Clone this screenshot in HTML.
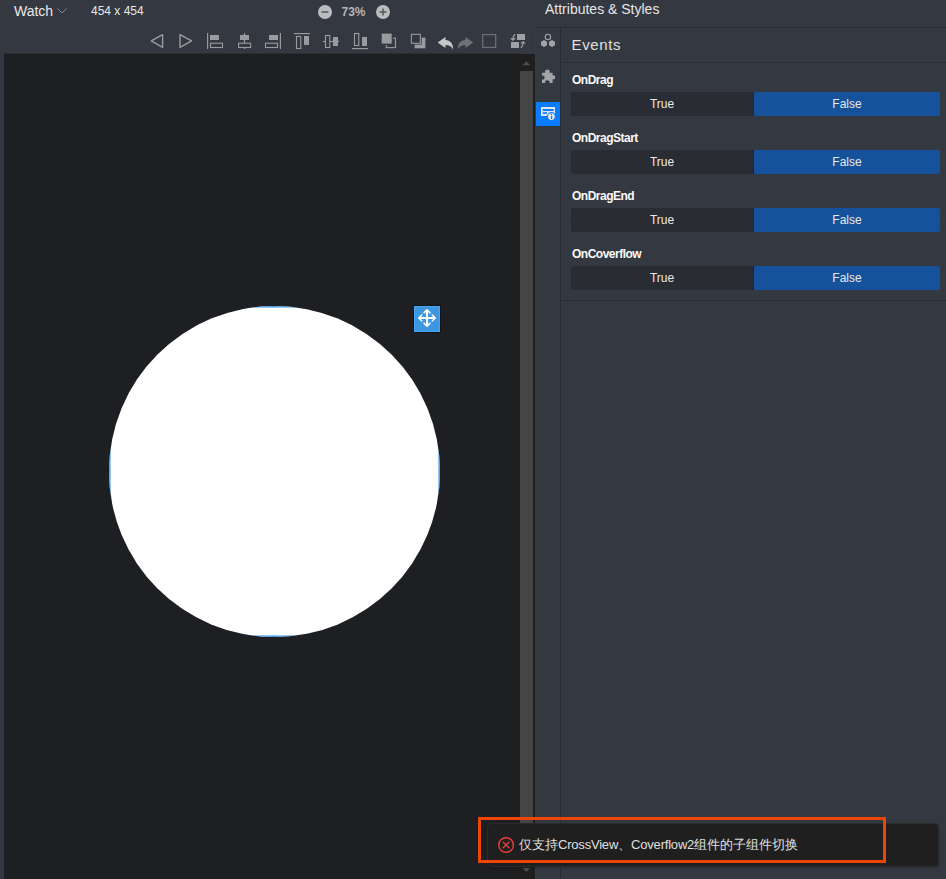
<!DOCTYPE html>
<html><head><meta charset="utf-8">
<style>
*{margin:0;padding:0;box-sizing:border-box}
html,body{width:946px;height:879px;overflow:hidden;background:#343840;font-family:"Liberation Sans",sans-serif;position:relative}
.abs{position:absolute}
#watch{left:14px;top:2px;font-size:14px;color:#e8e8e8;line-height:18px}
#size{left:91px;top:3px;font-size:12px;color:#e6e6e6;line-height:16px}
#pct{left:341.5px;top:4px;font-size:12px;font-weight:bold;color:#b4b5b8;line-height:16px}
#canvas{left:4px;top:54px;width:514px;height:825px;background:#1d1f23;box-shadow:0 -1px 0 #2a2d33}
#track{left:518px;top:54px;width:17px;height:825px;background:#1f1f1f}
#thumb{left:520px;top:71px;width:13px;height:760px;background:#454545}
#ptitle{left:545px;top:0px;font-size:14px;color:#e6e6e6;line-height:18px}
#hline{left:535px;top:27px;width:411px;height:1px;background:#2a2d34}
#side{left:535px;top:28px;width:25px;height:851px;background:#343840;border-left:1px solid #373b43}
#vdiv{left:560px;top:28px;width:1px;height:851px;background:#2a2d34}
#tab{left:536px;top:102px;width:24px;height:24px;background:#0a7cff}
#events{left:571.6px;top:36px;font-size:15px;letter-spacing:0.6px;color:#e0e0e0;line-height:18px}
#eline{left:561px;top:62px;width:385px;height:1px;background:#2a2d34}
#bline{left:561px;top:300px;width:385px;height:1px;background:#2a2d34}
.lbl{position:absolute;left:572px;font-size:12px;font-weight:bold;letter-spacing:-0.5px;color:#fafafa;line-height:14px}
.btns{position:absolute;left:571px;width:369px;height:24px;display:flex;border-radius:2px;overflow:hidden}
.bt{width:183px;background:#292c33;color:#e8e8e8;font-size:12px;text-align:center;line-height:24px;border-right:1px solid #23252b}
.bf{flex:1;background:#16529b;color:#e8e8e8;font-size:12px;text-align:center;line-height:24px}
#circle{left:109px;top:306px;width:331px;height:331px;border-radius:50%;overflow:hidden;background:#fff}
#circle div{position:absolute;left:0;top:0;width:331px;height:331px;border:1px solid #3f97e8;box-shadow:inset 0 0 0 1px rgba(63,151,232,0.55)}
#move{left:414px;top:306px;width:26px;height:26px;background:#3d96e0;border:1px solid #4aa5f2;box-shadow:0 0 0 1px rgba(10,10,10,0.55)}
#toastbox{left:478px;top:817px;width:408px;height:46px;border:3px solid #f04508}
#toast{left:487px;top:823px;width:452px;height:44px;box-shadow:0 1px 3px rgba(0,0,0,0.25);background:#1f1f1f;border:1px solid #2c2c2c;border-radius:4px}
.la{letter-spacing:-0.2px}
#tmsg{left:519px;top:836px;font-size:13px;color:#e0e0e0;line-height:18px;white-space:nowrap}
</style></head><body>
<div id="watch" class="abs">Watch</div>
<svg class="abs" style="left:57px;top:8px" width="11" height="7"><path d="M0.5 0.5 L5 5 L9.5 0.5" stroke="#8a8d93" fill="none" stroke-width="1"/></svg>
<div id="size" class="abs">454 x 454</div>
<svg class="abs" style="left:318px;top:5px" width="14" height="14"><circle cx="7" cy="7" r="7" fill="#bbbcc0"/><rect x="3.5" y="6.2" width="7" height="1.6" fill="#5a5d63"/></svg>
<div id="pct" class="abs">73%</div>
<svg class="abs" style="left:376px;top:5px" width="14" height="14"><circle cx="7" cy="7" r="7" fill="#bbbcc0"/><rect x="3.5" y="6.2" width="7" height="1.6" fill="#5a5d63"/><rect x="6.2" y="3.5" width="1.6" height="7" fill="#5a5d63"/></svg>

<svg class="abs" style="left:0;top:0" width="946" height="879" viewBox="0 0 946 879">
<g fill="none" stroke="#9a9b9f" stroke-width="1.4" stroke-linejoin="round">
<path d="M162.6 34.6 L151.3 40.9 L162.6 47.3 Z"/>
<path d="M180 34.6 L191.6 40.9 L180 47.3 Z"/>
</g>
<g fill="#9a9b9f">
<rect x="207" y="33" width="1.2" height="16"/>
<rect x="210" y="35" width="9" height="5"/>
<rect x="243.9" y="33" width="1.2" height="16"/>
<rect x="240" y="35" width="9" height="5"/>
<rect x="279.8" y="33" width="1.2" height="16"/>
<rect x="269" y="35" width="9" height="5"/>
<rect x="294" y="33" width="16" height="1.2"/>
<rect x="304" y="36" width="5" height="9"/>
<rect x="323" y="40.9" width="16" height="1.2"/>
<rect x="333" y="37" width="5" height="9"/>
<rect x="352" y="48" width="16" height="1.2"/>
<rect x="362" y="37" width="5" height="9"/>
</g>
<g fill="#343840" stroke="#9a9b9f" stroke-width="1.1">
<rect x="210.5" y="43.2" width="12" height="4.3"/>
<rect x="238.6" y="43.2" width="12" height="4.3"/>
<rect x="265.5" y="43.2" width="12" height="4.3"/>
<rect x="296.5" y="36.5" width="4.3" height="12"/>
<rect x="325.5" y="35.5" width="4.3" height="12"/>
<rect x="354.5" y="33.5" width="4.3" height="12"/>
</g>
<!-- bring front -->
<rect x="386.3" y="38.2" width="9.2" height="9.4" fill="none" stroke="#9a9b9f" stroke-width="1.1"/>
<rect x="381.7" y="33.6" width="10" height="10" fill="#9a9b9f" stroke="#343840" stroke-width="2.6"/>
<rect x="381.7" y="33.6" width="10" height="10" fill="#9a9b9f"/>
<!-- send back -->
<rect x="414.6" y="37.6" width="10.8" height="10.7" fill="#9a9b9f"/>
<rect x="411.4" y="34.3" width="9" height="9" fill="#343840" stroke="#343840" stroke-width="2.6"/>
<rect x="411.4" y="34.3" width="9" height="9" fill="#343840" stroke="#9a9b9f" stroke-width="1.1"/>
<!-- undo/redo -->
<path d="M437.6 42.5 L445.5 36.9 L445.5 40.1 C450.5 40.3 453.6 44.4 452.9 49.2 C451.2 46.2 448.8 45.1 445.5 45.1 L445.5 48 Z" fill="#c5c6c9"/>
<path d="M473.3 42.5 L465.4 36.9 L465.4 40.1 C460.4 40.3 457.3 44.4 458 49.2 C459.7 46.2 462.1 45.1 465.4 45.1 L465.4 48 Z" fill="#6f7075"/>
<rect x="482.7" y="34.6" width="13" height="12.8" fill="none" stroke="#6f7075" stroke-width="1.2"/>
<!-- switch -->
<g fill="#a0a1a5">
<rect x="517" y="34" width="8" height="6"/>
<rect x="511" y="42" width="8" height="6"/>
<path d="M509.9 38.3 L516 38.3 L513 41 Z"/>
<path d="M520.2 43.6 L526 43.6 L523 41 Z"/>
</g>
<g fill="none" stroke="#a0a1a5" stroke-width="1.3">
<path d="M515.3 34.2 C513.6 35.5 513 37 513 38.6"/>
<path d="M520.8 47.8 C522.4 46.5 523 45 523 43.4"/>
</g>
</svg>
<div id="canvas" class="abs"></div>
<div id="track" class="abs"></div>
<div id="thumb" class="abs"></div>
<svg class="abs" style="left:518px;top:53px" width="17" height="826" viewBox="518 53 17 826"><path d="M522.6 65.2 L526.4 61.2 L530.2 65.2 Z" fill="#4f4f4f"/><path d="M522.6 868 L526.4 872 L530.2 868 Z" fill="#4f4f4f"/></svg>

<div id="circle" class="abs"><div></div></div>
<div id="move" class="abs"></div>
<svg class="abs" style="left:414px;top:306px" width="26" height="26" viewBox="414 306 26 26">
<g fill="#fff">
<rect x="426" y="310.5" width="2" height="15"/>
<rect x="419.5" y="317" width="15" height="2"/>
</g>
<path d="M418.7 318 L427 309.7 L435.3 318 L427 326.3 Z" fill="none" stroke="#fff" stroke-opacity="0.28" stroke-width="1"/>
<g fill="none" stroke="#fff" stroke-width="1.6" stroke-linecap="round" stroke-linejoin="round">
<path d="M424.2 312.6 L427 309.8 L429.8 312.6"/>
<path d="M424.2 323.4 L427 326.2 L429.8 323.4"/>
<path d="M421.6 315.2 L418.8 318 L421.6 320.8"/>
<path d="M432.4 315.2 L435.2 318 L432.4 320.8"/>
</g>
</svg>


<div id="ptitle" class="abs">Attributes &amp; Styles</div>
<div id="hline" class="abs"></div>
<div id="side" class="abs"></div>
<div id="vdiv" class="abs"></div>
<div id="tab" class="abs"></div>
<svg class="abs" style="left:0;top:0" width="946" height="879" viewBox="0 0 946 879">
<g fill="#a3a4a7">
<circle cx="547.9" cy="37" r="2.7" fill="none" stroke="#a3a4a7" stroke-width="1.1"/>
<path d="M544 40.1 L547 41.8 L547 45.3 L544 47 L541 45.3 L541 41.8 Z"/>
<path d="M552 40.1 L555 41.8 L555 45.3 L552 47 L549 45.3 L549 41.8 Z"/>
<path d="M542 72.8 L545.2 72.8 C544.6 70.2 546 69.6 547.4 69.6 C548.8 69.6 550.2 70.2 549.6 72.8 L552.6 72.8 L552.6 75.4 C554.6 74.8 555.2 76 555.2 77.3 C555.2 78.6 554.6 79.8 552.6 79.2 L552.6 83 L549.6 83 C550.2 81 549 80.2 547.4 80.2 C545.8 80.2 544.6 81 545.2 83 L542 83 L542 79.5 C543.6 80 544.6 79 544.6 77.6 C544.6 76.2 543.6 75.2 542 75.7 Z"/>
</g>
<rect x="541" y="107" width="14" height="9" fill="#e2e6ee"/>
<rect x="542.7" y="109" width="11" height="2" fill="#0a7cff"/>
<rect x="542.7" y="112.2" width="4.3" height="1.7" fill="#0a7cff"/>
<circle cx="551.4" cy="116.6" r="4.5" fill="#0a7cff"/>
<circle cx="551.4" cy="116.6" r="3.4" fill="#e2e6ee"/>
<circle cx="551.5" cy="114.5" r="0.7" fill="#0a7cff"/>
<rect x="550.9" y="116" width="1.3" height="3" fill="#0a7cff"/>
</svg>
<div id="events" class="abs">Events</div>
<div id="eline" class="abs"></div>

<div class="lbl" style="top:73px">OnDrag</div>
<div class="btns" style="top:92px"><div class="bt">True</div><div class="bf">False</div></div>
<div class="lbl" style="top:131px">OnDragStart</div>
<div class="btns" style="top:150px"><div class="bt">True</div><div class="bf">False</div></div>
<div class="lbl" style="top:189px">OnDragEnd</div>
<div class="btns" style="top:208px"><div class="bt">True</div><div class="bf">False</div></div>
<div class="lbl" style="top:247px">OnCoverflow</div>
<div class="btns" style="top:266px"><div class="bt">True</div><div class="bf">False</div></div>
<div id="bline" class="abs"></div>

<div id="toast" class="abs"></div>
<div id="toastbox" class="abs"></div>
<svg class="abs" style="left:0;top:0" width="946" height="879" viewBox="0 0 946 879">
<circle cx="506.1" cy="845" r="7.3" fill="none" stroke="#ec3f3b" stroke-width="1.4"/>
<path d="M502.8 841.7 L509.4 848.3 M509.4 841.7 L502.8 848.3" stroke="#ec3f3b" stroke-width="1.3"/>
</svg>

<div id="tmsg" class="abs">仅支持<span class="la">CrossView</span>、<span class="la">Coverflow2</span>组件的子组件切换</div>
</body></html>
